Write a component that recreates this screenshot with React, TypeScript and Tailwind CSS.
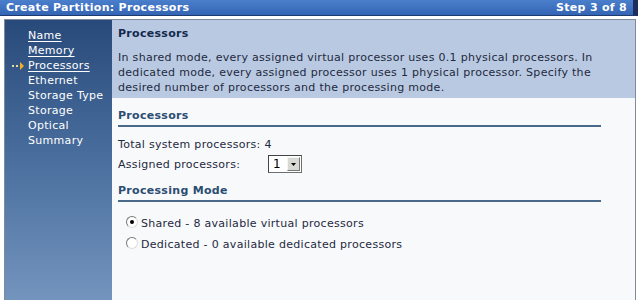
import React from "react";

const navItems = [
  { label: "Name", link: true },
  { label: "Memory", link: true },
  { label: "Processors", link: true, current: true },
  { label: "Ethernet" },
  { label: "Storage Type" },
  { label: "Storage" },
  { label: "Optical" },
  { label: "Summary" },
];

function Arrow() {
  return (
    <svg width="14" height="8" viewBox="0 0 14 8" className="absolute left-[-16px] top-[4px]">
      <rect x="0" y="3" width="2" height="2" fill="#e8d9a0" />
      <rect x="4" y="3" width="2" height="2" fill="#e8d9a0" />
      <path d="M8 0 L12 4 L8 8 Z" fill="#f0b020" />
    </svg>
  );
}

export default function App() {
  return (
    <div className="w-[638px] h-[300px] bg-white overflow-hidden font-['DejaVu_Sans',sans-serif] text-[11px] tracking-[0.3px] text-[#1e2a40]">
      {/* Title bar */}
      <div className="h-[16px] flex items-center justify-between pl-[6px] pr-[6px] bg-gradient-to-b from-[#4a7fcc] to-[#3465b4] border-b border-[#1f3c70] border-r-[5px] border-r-[#1c2f5c] text-white font-bold text-[11px] tracking-[0.3px] leading-[15px]">
        <span>Create Partition: Processors</span>
        <span>Step 3 of 8</span>
      </div>
      <div className="h-[3px]" />
      {/* Box */}
      <div className="flex ml-[4px] mr-[2px] h-[281px] border-l border-t border-r border-[#7d8b9c]">
        {/* Sidebar */}
        <div className="w-[107px] bg-gradient-to-b from-[#284a7a] via-[#4a6f9e] to-[#7394bd] pt-[8px] pl-[23px]">
          {navItems.map((it) => (
            <div key={it.label} className="relative leading-[15px] text-white">
              {it.current && <Arrow />}
              <span className={it.link ? "underline underline-offset-[2px]" : ""}>{it.label}</span>
            </div>
          ))}
        </div>
        {/* Main */}
        <div className="flex-1 flex flex-col">
          <div className="h-[78px] bg-[#b9c9e1] px-[6px] pt-[6px]">
            <div className="font-bold text-[#13294d] leading-[15px]">Processors</div>
            <p className="mt-[9px] leading-[15px] pr-[20px]">
              In shared mode, every assigned virtual processor uses 0.1 physical processors. In dedicated mode, every assigned processor uses 1 physical processor. Specify the desired number of processors and the processing mode.
            </p>
          </div>
          <div className="flex-1 bg-[#f8f9fb] pl-[6px] pt-[10px]">
            <div className="w-[483px]">
              <div className="font-bold text-[#2b4d72] leading-[15px] pb-[2px] border-b-2 border-[#4a6988]">Processors</div>
              <div className="mt-[10px] leading-[15px]">Total system processors: 4</div>
              <div className="mt-[3px] flex items-center">
                <span className="w-[150px] leading-[15px]">Assigned processors:</span>
                <div className="flex items-center h-[18px] border border-[#6f6f6f] border-t-[#444] border-l-[#444] bg-white">
                  <span className="w-[18px] pl-[4px] text-[12px] leading-[15px] text-black">1</span>
                  <span className="w-[13px] h-[14px] mr-[1px] bg-[#d8d8d4] border border-[#f4f4f4] border-r-[#777] border-b-[#777] flex items-center justify-center">
                    <svg width="5" height="3" viewBox="0 0 5 3"><path d="M0 0H5L2.5 3Z" fill="#000" /></svg>
                  </span>
                </div>
              </div>
              <div className="mt-[10px] font-bold text-[#2b4d72] leading-[15px] pb-[2px] border-b-2 border-[#4a6988]">Processing Mode</div>
              <div className="mt-[14px] pl-[8px] flex flex-col gap-[6px]">
                <label className="flex items-center gap-[3px] leading-[15px]">
                  <span className="w-[12px] h-[12px] rounded-full border border-[#777] border-r-[#ddd] border-b-[#ddd] bg-white flex items-center justify-center -mt-[4px]">
                    <span className="w-[4px] h-[4px] rounded-full bg-black" />
                  </span>
                  <span>Shared - 8 available virtual processors</span>
                </label>
                <label className="flex items-center gap-[3px] leading-[15px]">
                  <span className="w-[12px] h-[12px] rounded-full border border-[#777] border-r-[#ddd] border-b-[#ddd] bg-white -mt-[4px]" />
                  <span>Dedicated - 0 available dedicated processors</span>
                </label>
              </div>
            </div>
          </div>
        </div>
      </div>
    </div>
  );
}
